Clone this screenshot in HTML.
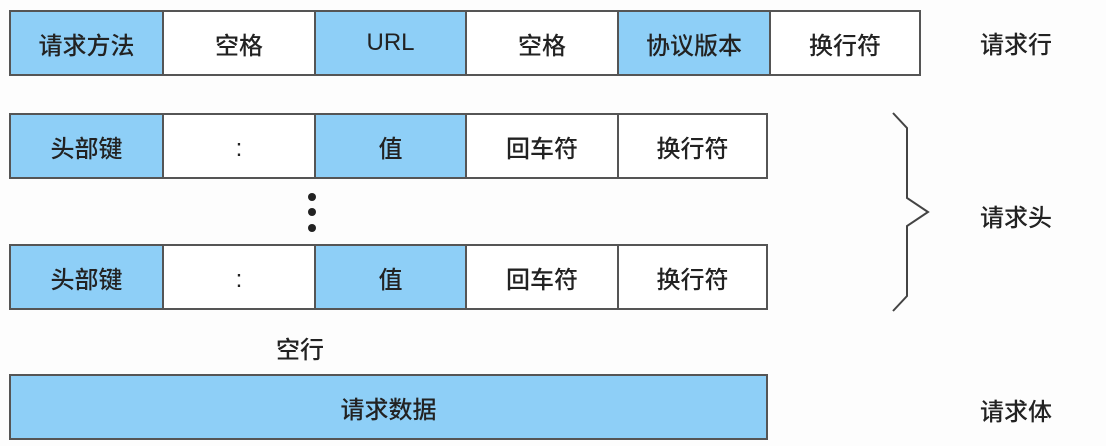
<!DOCTYPE html>
<html><head><meta charset="utf-8"><style>
body{margin:0;width:1106px;height:446px;background:#fdfdfd;position:relative;overflow:hidden;font-family:"Liberation Sans","Noto Sans CJK SC",sans-serif;color:#222}
.row{position:absolute;left:9px;display:flex;border:2px solid #555;box-sizing:border-box}
.c{box-sizing:border-box;border-left:2px solid #555;display:flex;align-items:center;justify-content:center;font-size:24px;font-weight:500;background:#fff}
.c:first-child{border-left:none}
.b{background:#8ecff7}
.lbl{position:absolute;left:980px;font-size:24px;font-weight:500}
.dot{position:absolute;left:308px;width:8px;height:8px;border-radius:50%;background:#222}
.col{display:inline-block;transform:translateY(3px)}
</style></head><body>
<div class="row" style="top:10px;height:66px;width:912px">
<div class="c b" style="width:151px">请求方法</div><div class="c" style="width:152px">空格</div><div class="c b" style="width:151px">URL</div><div class="c" style="width:152px">空格</div><div class="c b" style="width:152px">协议版本</div><div class="c" style="width:150px">换行符</div></div>
<div class="row" style="top:113px;height:66px;width:759px">
<div class="c b" style="width:151px">头部键</div><div class="c" style="width:152px"><span class="col">:</span></div><div class="c b" style="width:151px">值</div><div class="c" style="width:152px">回车符</div><div class="c" style="width:149px">换行符</div></div>
<div class="dot" style="top:193px"></div><div class="dot" style="top:208px"></div><div class="dot" style="top:224px"></div>
<div class="row" style="top:244px;height:66px;width:759px">
<div class="c b" style="width:151px">头部键</div><div class="c" style="width:152px"><span class="col">:</span></div><div class="c b" style="width:151px">值</div><div class="c" style="width:152px">回车符</div><div class="c" style="width:149px">换行符</div></div>
<div style="position:absolute;left:276px;top:330px;font-size:24px;font-weight:500">空行</div>
<div class="row" style="top:374px;height:66px;width:759px"><div class="c b" style="width:755px">请求数据</div></div>
<svg style="position:absolute;left:0;top:0" width="1106" height="446"><path d="M893 113 L907 128 L907 198 L928 212 L907 226 L907 296 L893 311" fill="none" stroke="#444" stroke-width="2"/></svg>
<div class="lbl" style="top:25px">请求行</div>
<div class="lbl" style="top:198px">请求头</div>
<div class="lbl" style="top:392px">请求体</div>
</body></html>
